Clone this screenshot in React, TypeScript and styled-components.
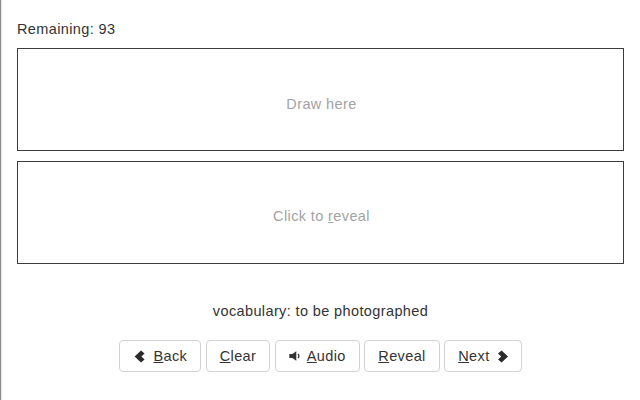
import React from 'react';
import styled, { createGlobalStyle } from 'styled-components';

const GlobalStyle = createGlobalStyle`
  html, body {
    margin: 0;
    padding: 0;
    background: #fff;
  }
  #root {
    height: 400px;
    overflow: hidden;
  }
`;

const Page = styled.div`
  box-sizing: border-box;
  width: 640px;
  height: 400px;
  padding: 21px 16px 0 16px;
  border-left: 1px solid #8c8c8c;
  box-shadow: inset 1px 0 0 #e4e4e4;
  font-family: 'Liberation Sans', Arial, sans-serif;
  font-size: 14.5px;
  line-height: 17px;
  letter-spacing: 0.38px;
  color: #333;
`;

const Remaining = styled.div`
  margin-bottom: 10px;
`;

const Panel = styled.div<{ $offset: number }>`
  box-sizing: border-box;
  display: flex;
  align-items: center;
  justify-content: center;
  height: 103px;
  margin-bottom: 10px;
  padding: ${({ $offset }) => $offset}px 0 0 2px;
  border: 1px solid #3c3c3c;
  color: #a3a3a3;
`;

const Vocabulary = styled.div`
  margin-top: 39px;
  text-align: center;
`;

const Toolbar = styled.div`
  display: flex;
  justify-content: center;
  gap: 4.5px;
  margin-top: 20px;
`;

const Button = styled.button`
  box-sizing: border-box;
  display: flex;
  align-items: center;
  gap: 6px;
  height: 32px;
  padding: 0 13px;
  background: #fff;
  border: 1px solid #d2d2d2;
  border-radius: 4px;
  font: inherit;
  letter-spacing: inherit;
  color: #333;
`;

const Key = styled.span`
  text-decoration: underline;
`;

const ChevronLeft = () => (
  <svg width="14" height="13" viewBox="-2 0 14 13" fill="#2b2b2b">
    <path d="M6 0.4 9.6 3.6 6.4 6.5l3.2 2.9L6 12.6-0.4 6.5z" />
  </svg>
);

const ChevronRight = () => (
  <svg width="12" height="13" viewBox="0 0 12 13" fill="#2b2b2b">
    <path d="M5.6 0.4 2 3.6l3.2 2.9L2 9.4l3.6 3.2L12 6.5z" />
  </svg>
);

const VolumeDown = () => (
  <svg width="12" height="12" viewBox="0 0 12 12" fill="#333">
    <path d="M0.3 4h3L7.3 1.2v9.6L3.3 8h-3z" />
    <path d="M9 3.9c1.2 1.1 1.2 3.1 0 4.2" fill="none" stroke="#333" strokeWidth="1.3" />
  </svg>
);

export default function App() {
  return (
    <Page>
      <GlobalStyle />
      <Remaining>Remaining: 93</Remaining>
      <Panel $offset={9}>Draw here</Panel>
      <Panel $offset={8}>
        <span>
          Click to <Key>r</Key>eveal
        </span>
      </Panel>
      <Vocabulary>vocabulary: to be photographed</Vocabulary>
      <Toolbar>
        <Button>
          <ChevronLeft />
          <span>
            <Key>B</Key>ack
          </span>
        </Button>
        <Button>
          <span>
            <Key>C</Key>lear
          </span>
        </Button>
        <Button>
          <VolumeDown />
          <span>
            <Key>A</Key>udio
          </span>
        </Button>
        <Button>
          <span>
            <Key>R</Key>eveal
          </span>
        </Button>
        <Button>
          <span>
            <Key>N</Key>ext
          </span>
          <ChevronRight />
        </Button>
      </Toolbar>
    </Page>
  );
}
